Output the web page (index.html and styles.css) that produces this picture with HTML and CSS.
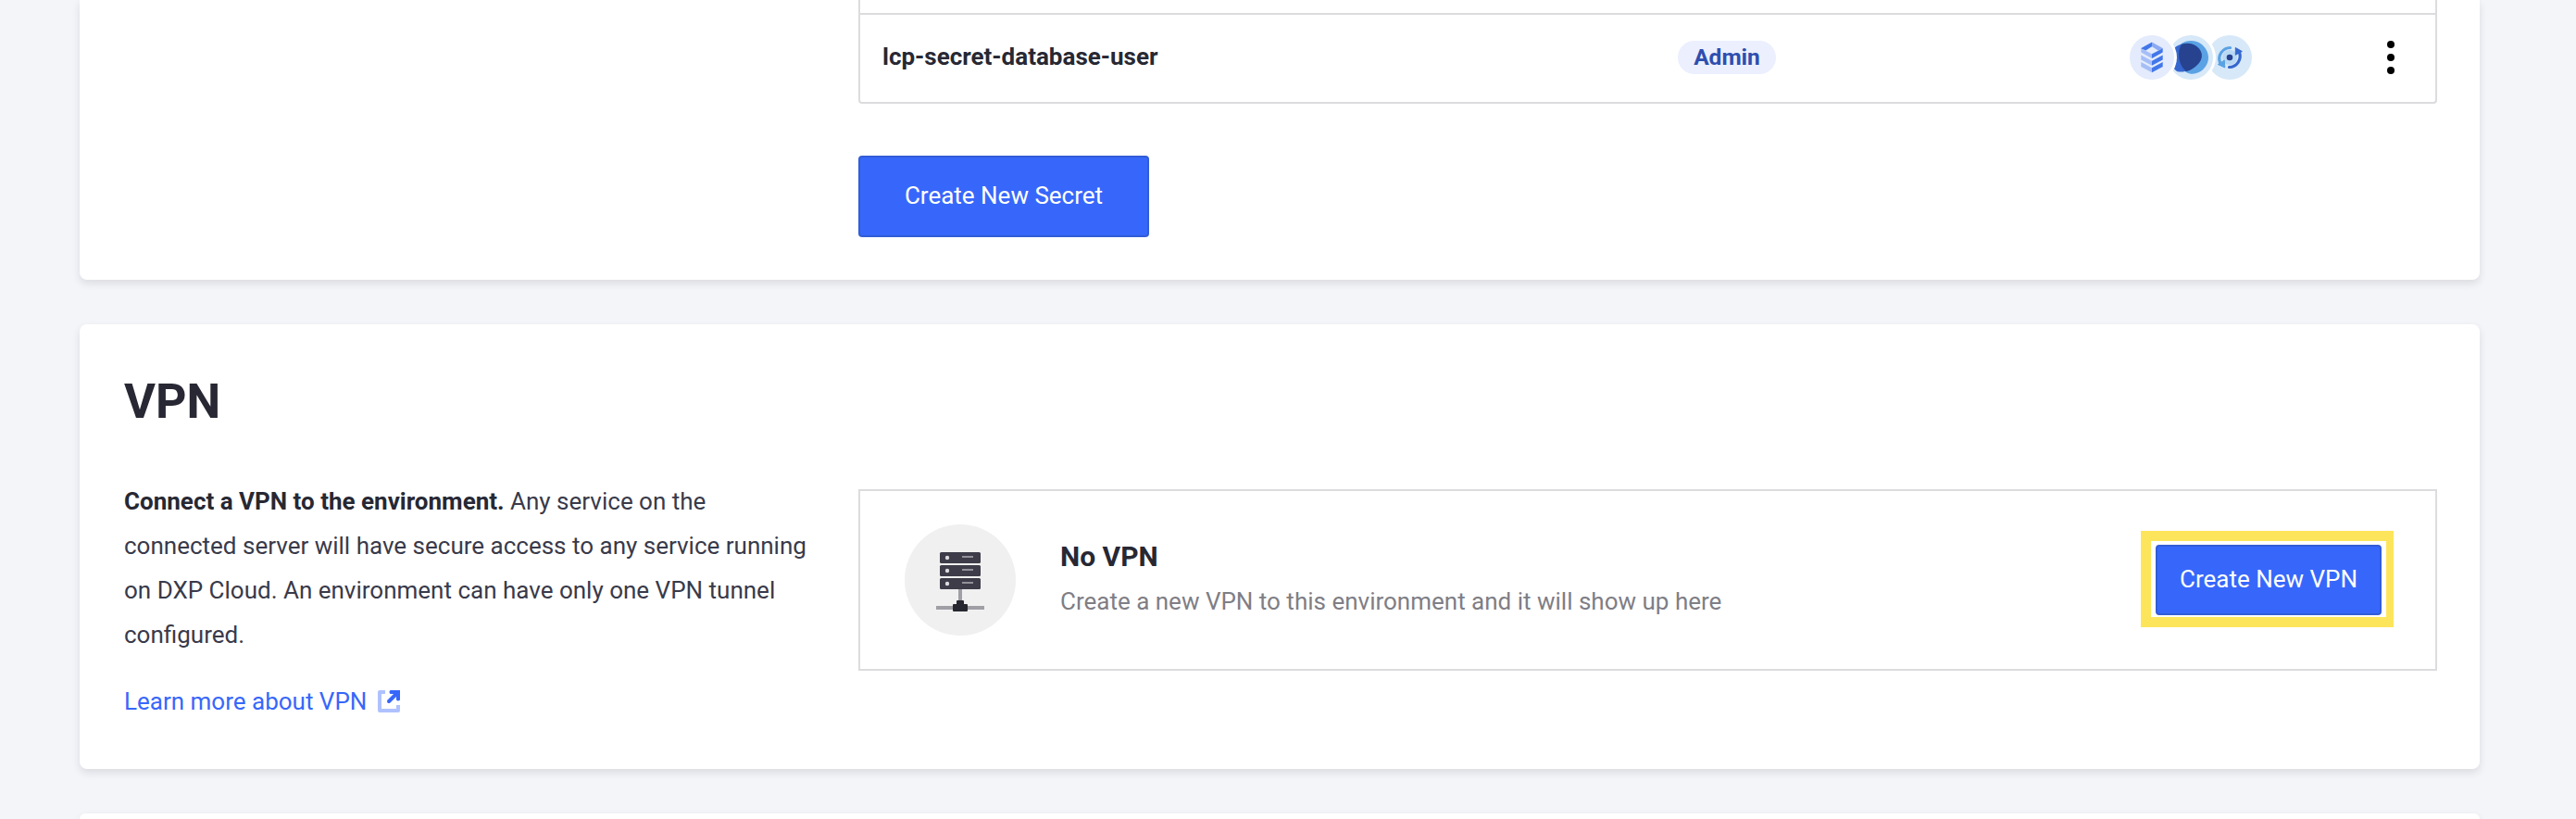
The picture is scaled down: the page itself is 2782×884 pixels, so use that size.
FILE: index.html
```html
<!DOCTYPE html>
<html lang="en">
<head>
<meta charset="utf-8">
<title>Environment settings</title>
<link rel="stylesheet" href="styles.css">
</head>
<body>
<main class="page">
  <section class="card card-secrets">
    <div class="secrets">
      <div class="secret-table">
        <div class="secret-row secret-row-cut"></div>
        <div class="secret-row">
          <span class="secret-name">lcp-secret-database-user</span>
          <span class="secret-role"><span class="badge">Admin</span></span>
          <svg class="services" width="132" height="48" viewBox="0 0 132 48">
            <circle cx="108" cy="24" r="24" fill="#d7e8f8"/>
            <circle cx="108" cy="24" r="8" fill="#b9d8f4"/>
            <path d="M97.500 29.500A12 12 0 0 1 108.500 13.500" fill="none" stroke="#5aa2e4" stroke-width="3.200" stroke-linecap="round"/>
            <path d="M95.300 31.500l7-4.500 .500 8z" fill="#5aa2e4" stroke="#5aa2e4" stroke-linejoin="round"/>
            <path d="M118.500 18.500A12 12 0 0 1 107.500 34.500" fill="none" stroke="#3567cf" stroke-width="3.200" stroke-linecap="round"/>
            <path d="M114.300 13.500l7 4-7 3.800z" fill="#3567cf" stroke="#3567cf" stroke-linejoin="round"/>
            <circle cx="108" cy="24" r="3.300" fill="#27428f"/>
            <circle cx="66" cy="24" r="27" fill="#fff"/>
            <circle cx="66" cy="24" r="24" fill="#d7e8f8"/>
            <path d="M56 9C62 4.500 72 5 78 10C85 16 87 25 83 32C78 41 68 44 61 40C50 33 48 15 56 9Z" fill="#5aa2e4"/>
            <path d="M48 14C54 8 64 8 71 11C79 16 80 25 74 31C66 38 58 41 51 39C44 35 43 20 48 14Z" fill="#3567cf"/>
            <path d="M56 10C62 8 67 8.500 72 12C80 18 79 26 73 32C69 36 65 38.500 61 39C52 32 51 17 56 10Z" fill="#27428f"/>
            <circle cx="24" cy="24" r="27" fill="#fff"/>
            <circle cx="24" cy="24" r="24" fill="#e4ebfc"/>
            <path d="M24 7.500L12.300 14V14.500L17.300 16.500L24 12.200Z" fill="#4277ea"/>
            <path d="M24 7.500L35.700 14V14.500L30.700 16.500L24 12.200Z" fill="#8aaaf2"/>
            <path d="M12.300 14.200L24 20.300V25L12.300 18.500Z" fill="#a6bef6"/>
            <path d="M35.700 14.200L24 20.300V25L35.700 18.500Z" fill="#4277ea"/>
            <path d="M12.300 21.500L24 27.800V32.800L12.300 26.500ZM12.300 29L24 35.300V40.300L12.300 34Z" fill="#a6bef6"/>
            <path d="M35.700 21.500L24 27.800V32.800L35.700 26.500ZM35.700 29L24 35.300V40.300L35.700 34Z" fill="#4277ea"/>
          </svg>
          <svg class="kebab" width="8" height="36" viewBox="0 0 8 36"><circle cx="4" cy="4" r="4"/><circle cx="4" cy="18" r="4"/><circle cx="4" cy="32" r="4"/></svg>
        </div>
      </div>
      <button class="button button-large">Create New Secret</button>
    </div>
  </section>

  <section class="card card-vpn">
    <h2 class="card-title">VPN</h2>
    <div class="columns">
      <div class="about">
        <p class="about-text"><strong>Connect a VPN to the environment.</strong> Any service on the connected server will have secure access to any service running on DXP Cloud. An environment can have only one VPN tunnel configured.</p>
        <a class="link">Learn more about VPN
          <svg width="24" height="24" viewBox="0 0 24 24" fill="none">
            <path d="M8 2H2V22H22V16" stroke="#afc2ff" stroke-width="4" stroke-linejoin="round"/>
            <path d="M12 12L20 4" stroke="#3767fa" stroke-width="4" stroke-linecap="round"/>
            <path d="M13.500 0H24V10.500Q22 12.500 20 10.500V4H13.500Q11.500 2 13.500 0Z" fill="#3767fa"/>
          </svg>
        </a>
      </div>
      <div class="vpn-box">
        <svg class="vpn-icon" width="120" height="120" viewBox="0 0 120 120">
          <circle cx="60" cy="60" r="60" fill="#f0f0f0"/>
          <path d="M58 70h4v12h-4zM34 88h52v4H34z" fill="#a09fa6"/>
          <g fill="#3d3c48"><rect x="38" y="30" width="44" height="12" rx="1.500"/><rect x="38" y="44" width="44" height="12" rx="1.500"/><rect x="38" y="58" width="44" height="12" rx="1.500"/></g>
          <g fill="#dcdcdf"><circle cx="46" cy="36" r="2.200"/><circle cx="46" cy="50" r="2.200"/><circle cx="46" cy="64" r="2.200"/></g>
          <path d="M62 34h12v2H62zM62 48h12v2H62zM62 62h12v2H62z" fill="#93929a"/>
          <path d="M57 82h6q1 0 1 1v3h3q1 0 1 1v6q0 1-1 1H53q-1 0-1-1v-6q0-1 1-1h3v-3q0-1 1-1z" fill="#272731"/>
        </svg>
        <div class="vpn-text">
          <h3 class="vpn-heading">No VPN</h3>
          <p class="vpn-note">Create a new VPN to this environment and it will show up here</p>
        </div>
        <div class="highlight"><button class="button">Create New VPN</button></div>
      </div>
    </div>
  </section>

  <section class="card card-next"></section>
</main>
</body>
</html>
```
FILE: styles.css
```css
* { box-sizing: border-box; }
body {
  margin: 0;
  height: 884px;
  overflow: hidden;
  background: #f4f5f9;
  color: #272833;
  font: 26px/48px Roboto, sans-serif;
}
h2, h3, p { margin: 0; }
.page {
  display: flex;
  flex-direction: column;
  gap: 48px;
  width: 2592px;
  margin-left: 86px;
}
.card {
  flex: none;
  background: #fff;
  border-radius: 8px;
  box-shadow: 0 4px 8px rgba(39, 40, 51, 0.12);
}
.card-secrets {
  height: 302px;
  padding: 0 46px 46px 841px;
  border-top-left-radius: 0;
  border-top-right-radius: 0;
}
.secrets {
  display: flex;
  flex-direction: column;
  align-items: flex-start;
  gap: 56px;
}
.secret-table {
  width: 100%;
  border: 2px solid #dcdcde;
  border-top: 0;
  border-radius: 0 0 4px 4px;
}
.secret-row {
  display: grid;
  grid-template-columns: 859px 488px 1fr 8px;
  align-items: center;
  height: 94px;
  padding: 0 44px 2px 24px;
}
.secret-row-cut {
  height: 16px;
  border-bottom: 2px solid #dcdcde;
}
.secret-name {
  padding-bottom: 2px;
  font-weight: 700;
}
.secret-role { display: flex; }
.badge {
  width: 106px;
  height: 36px;
  border-radius: 18px;
  background: #ebeffe;
  color: #2e4eae;
  font-size: 24.5px;
  font-weight: 700;
  line-height: 35px;
  text-align: center;
}
.button {
  display: block;
  width: 244px;
  height: 76px;
  padding: 0 0 2px;
  border: 2px solid #325dd6;
  border-radius: 4px;
  background: #3767fa;
  color: #fff;
  font: 26px/1 Roboto, sans-serif;
}
.button-large {
  width: 314px;
  height: 88px;
}
.card-vpn {
  height: 480px;
  padding: 48px 46px 0 48px;
}
.card-title {
  font-size: 52px;
  font-weight: 700;
  line-height: 72px;
}
.columns {
  display: flex;
  justify-content: space-between;
  padding-top: 47px;
}
.about { width: 742px; }
.about-text { color: #393a4a; }
.about-text strong { color: #272833; }
.link {
  display: flex;
  align-items: center;
  gap: 12px;
  margin-top: 24px;
  color: #3767fa;
}
.vpn-box {
  display: flex;
  align-items: center;
  width: 1705px;
  height: 196px;
  margin-top: 11px;
  padding: 0 45px 0 48px;
  border: 2px solid #dcdcde;
}
.vpn-text {
  flex: 1;
  padding: 0 0 2px 48px;
}
.vpn-heading {
  font-size: 30px;
  font-weight: 700;
  line-height: 48px;
}
.vpn-note { color: #7f7e85; }
.highlight {
  margin-bottom: 2px;
  border: 11px solid #fde55b;
  border-right-width: 8px;
  padding: 4px 5px 2px;
}
.card-next {
  height: 6px;
  border-radius: 8px 8px 0 0;
}
```
